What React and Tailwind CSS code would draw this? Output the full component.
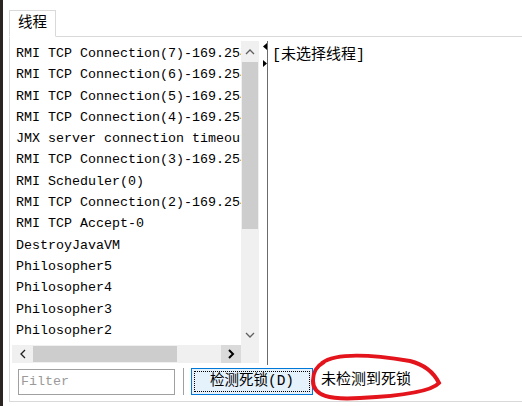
import React from 'react';

const threads = [
  'RMI TCP Connection(7)-169.254.1.1',
  'RMI TCP Connection(6)-169.254.1.1',
  'RMI TCP Connection(5)-169.254.1.1',
  'RMI TCP Connection(4)-169.254.1.1',
  'JMX server connection timeout 21',
  'RMI TCP Connection(3)-169.254.1.1',
  'RMI Scheduler(0)',
  'RMI TCP Connection(2)-169.254.1.1',
  'RMI TCP Accept-0',
  'DestroyJavaVM',
  'Philosopher5',
  'Philosopher4',
  'Philosopher3',
  'Philosopher2',
  'Philosopher1',
];

const FONT = "font-['Liberation_Mono','Noto_Sans_CJK_SC',monospace]";

const Chevron = ({ dir, color = '#606060', bold = false }) => {
  const pts = {
    up: '1,6 5,2 9,6',
    down: '1,2 5,6 9,2',
    left: '6,1 2,5 6,9',
    right: '2,1 6,5 2,9',
  }[dir];
  const vertical = dir === 'up' || dir === 'down';
  return (
    <svg width={vertical ? 10 : 8} height={vertical ? 8 : 10} viewBox={vertical ? '0 0 10 8' : '0 0 8 10'}>
      <polyline points={pts} fill="none" stroke={color} strokeWidth={bold ? 2 : 1.3} />
    </svg>
  );
};

export default function App() {
  return (
    <div className={`relative flex w-[522px] h-[406px] bg-white overflow-hidden ${FONT}`}>
      {/* desktop edge behind window */}
      <div className="w-[3px] h-full bg-[#2a2522]" />

      <div className="flex-1 flex flex-col pl-[6px] pt-[10px]">
        {/* Tab header */}
        <div className="flex">
          <div className="relative z-10 -mb-px w-[47px] h-[27px] border border-b-white border-[#d9d9d9] bg-white flex items-center justify-center text-[14.5px] text-black">
            线程
          </div>
        </div>

        {/* Tab panel */}
        <div className="flex flex-col h-[366px] border-l border-t border-b border-[#d9d9d9]">
          <div className="flex pt-[4px] pl-[2px]">
            {/* thread list */}
            <div className="flex flex-col w-[247px]">
              <div className="flex h-[304px]">
                <div className="w-[229px] overflow-hidden pt-[2px] pl-[4px]">
                  {threads.map((t) => (
                    <div key={t} className="h-[21.3px] leading-[21.3px] text-[13.33px] text-black whitespace-nowrap">
                      {t}
                    </div>
                  ))}
                </div>
                <div className="w-[18px] bg-[#f0f0f0] flex flex-col">
                  <div className="h-[21px] flex items-center justify-center">
                    <Chevron dir="up" />
                  </div>
                  <div className="mx-[1px] h-[167px] bg-[#cdcdcd]" />
                  <div className="flex-1" />
                  <div className="h-[20px] flex items-center justify-center">
                    <Chevron dir="down" />
                  </div>
                </div>
              </div>
              <div className="flex h-[18px]">
                <div className="w-[229px] bg-[#f0f0f0] flex">
                  <div className="w-[21px] flex items-center justify-center">
                    <Chevron dir="left" color="#202020" />
                  </div>
                  <div className="w-[144px] my-[1px] bg-[#cdcdcd]" />
                  <div className="flex-1" />
                  <div className="w-[20px] bg-[#dadada] flex items-center justify-center">
                    <Chevron dir="right" color="#000" bold />
                  </div>
                </div>
                <div className="w-[18px] bg-[#f0f0f0]" />
              </div>
            </div>

            {/* splitter */}
            <div className="relative w-[9px] h-[324px] border-r border-[#6b6b6b]">
              <svg className="absolute left-[4px] top-[2px]" width="4" height="24" viewBox="0 0 4 24">
                <polygon points="4,0 0,3.5 4,7" fill="#000" />
                <polygon points="0,17 4,20.5 0,24" fill="#000" />
              </svg>
            </div>

            {/* detail pane */}
            <div className="flex-1 pl-[4px] pt-[5px] text-[15px] leading-[20px] text-black">
              [未选择线程]
            </div>
          </div>

          {/* bottom controls */}
          <div className="flex items-center h-[27px] mt-[3px] pl-[8px]">
            <div className="w-[157px] h-[26px] border border-[#a0a0a0] flex items-center pl-[2px] text-[13.33px] text-[#9a9a9a]">
              Filter
            </div>
            <div className="ml-[8px] w-px h-[27px] bg-[#a0a0a0]" />
            <button className="ml-[7px] w-[122px] h-[27px] border border-[#0078d7] bg-[#e5f1fb] p-[2px]">
              <div className="w-full h-full border border-dotted border-black flex items-center justify-center text-[14.5px] text-black">
                检测死锁(D)
              </div>
            </button>
            <span className="ml-[8px] text-[15px] text-black">未检测到死锁</span>
          </div>
        </div>
      </div>

      {/* red hand-drawn annotation */}
      <svg className="absolute inset-0 pointer-events-none" width="522" height="406" viewBox="0 0 522 406">
        <path
          d="M 322 363 C 338 351, 380 356, 410 361 C 426 365, 435 375, 439 383 C 431 392, 400 396, 360 398 C 330 400, 313 396, 313 381 C 313 371, 317 366, 324 362"
          fill="none"
          stroke="#e3141b"
          strokeWidth="4"
          strokeLinecap="round"
        />
      </svg>
    </div>
  );
}
